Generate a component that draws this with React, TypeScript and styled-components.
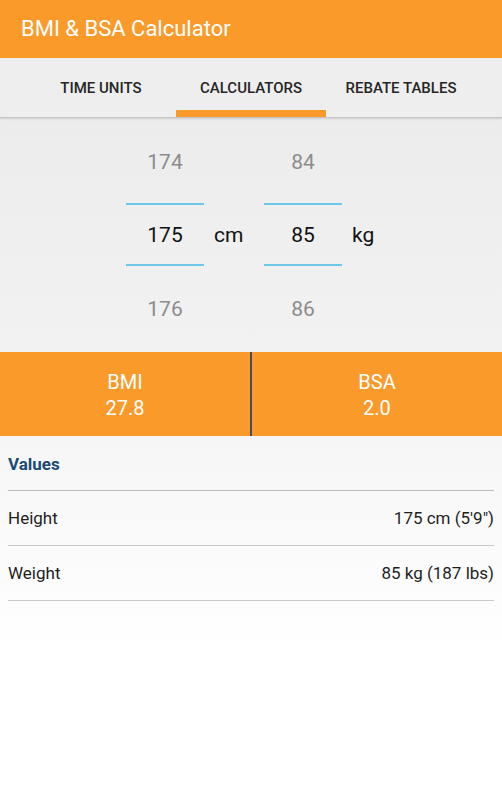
import React from "react";
import styled, { createGlobalStyle } from "styled-components";

const GlobalStyle = createGlobalStyle`
  html, body {
    margin: 0;
    padding: 0;
    background: #ffffff;
    font-family: Roboto, "Noto Sans", sans-serif;
  }
`;

const ORANGE = "#f99a2a";

const tabs = ["TIME UNITS", "CALCULATORS", "REBATE TABLES"];

type PickerProps = { values: [string, string, string]; unit: string };

const Picker = ({ values, unit }: PickerProps) => (
  <PickerGroup>
    <PickerColumn>
      <PickerCell $pos="top">{values[0]}</PickerCell>
      <SelectedCell>{values[1]}</SelectedCell>
      <PickerCell $pos="bottom">{values[2]}</PickerCell>
    </PickerColumn>
    <Unit>{unit}</Unit>
  </PickerGroup>
);

const rows = [
  { label: "Height", value: "175 cm (5'9\")" },
  { label: "Weight", value: "85 kg (187 lbs)" },
];

const App = () => {
  return (
    <Screen>
      <GlobalStyle />
      <AppBar>BMI &amp; BSA Calculator</AppBar>
      <TabBar>
        {tabs.map((t, i) => (
          <Tab key={t} $active={i === 1}>
            {t}
          </Tab>
        ))}
      </TabBar>
      <PickerArea>
        <Picker values={["174", "175", "176"]} unit="cm" />
        <Picker values={["84", "85", "86"]} unit="kg" />
      </PickerArea>
      <Results>
        <Result>
          <span>BMI</span>
          <span>27.8</span>
        </Result>
        <Result>
          <span>BSA</span>
          <span>2.0</span>
        </Result>
      </Results>
      <Values>
        <SectionTitle>Values</SectionTitle>
        {rows.map((r) => (
          <Row key={r.label}>
            <span>{r.label}</span>
            <span>{r.value}</span>
          </Row>
        ))}
      </Values>
    </Screen>
  );
};

const Screen = styled.div`
  width: 502px;
  height: 800px;
  display: flex;
  flex-direction: column;
  overflow: hidden;
`;

const AppBar = styled.div`
  height: 58px;
  background: ${ORANGE};
  color: #ffffff;
  font-size: 22px;
  display: flex;
  align-items: center;
  padding-left: 21px;
  box-sizing: border-box;
  padding-bottom: 1px;
`;

const TabBar = styled.div`
  height: 60px;
  background: #eeeeee;
  display: flex;
  justify-content: center;
  border-bottom: 1px solid #c4c4c4;
  box-sizing: border-box;
  box-shadow: 0 1px 2px rgba(0, 0, 0, 0.12);
  position: relative;
  z-index: 1;
`;

const Tab = styled.div<{ $active: boolean }>`
  width: 150px;
  display: flex;
  align-items: center;
  justify-content: center;
  font-size: 15px;
  font-weight: 500;
  color: #262626;
  box-sizing: border-box;
  border-bottom: 7px solid ${(p) => (p.$active ? ORANGE : "transparent")};
  padding-top: 8px;
`;

const PickerArea = styled.div`
  height: 234px;
  background: linear-gradient(#ececec, #f2f2f2);
  display: flex;
  padding-left: 126px;
`;

const PickerGroup = styled.div`
  display: flex;
  align-items: flex-start;
`;

const PickerColumn = styled.div`
  width: 78px;
  display: flex;
  flex-direction: column;
`;

const PickerCell = styled.div<{ $pos: "top" | "bottom" }>`
  height: ${(p) => (p.$pos === "top" ? 85 : 86)}px;
  display: flex;
  align-items: center;
  justify-content: center;
  font-size: 21px;
  color: #8c8c8c;
  padding-top: ${(p) => (p.$pos === "top" ? 3 : 0)}px;
  box-sizing: border-box;
`;

const SelectedCell = styled.div`
  height: 63px;
  border-top: 2px solid #6ec6ea;
  border-bottom: 2px solid #6ec6ea;
  box-sizing: border-box;
  display: flex;
  align-items: center;
  justify-content: center;
  font-size: 21px;
  color: #111111;
`;

const Unit = styled.div`
  margin-top: 85px;
  height: 63px;
  display: flex;
  align-items: center;
  font-size: 21px;
  color: #111111;
  padding-left: 10px;
  width: 60px;
  box-sizing: border-box;
`;

const Results = styled.div`
  height: 84px;
  background: ${ORANGE};
  display: flex;
`;

const Result = styled.div`
  flex: 1;
  display: flex;
  flex-direction: column;
  align-items: center;
  justify-content: center;
  color: #ffffff;
  font-size: 20px;
  line-height: 26px;
  padding-top: 2px;
  & + & {
    border-left: 2px solid #4b4863;
  }
`;

const Values = styled.div`
  flex: 1;
  background: linear-gradient(#f6f6f6, #ffffff 60%);
  padding: 0 8px;
`;

const SectionTitle = styled.div`
  height: 55px;
  display: flex;
  align-items: center;
  font-size: 17px;
  font-weight: 700;
  color: #1b4a76;
  border-bottom: 1px solid #bdbdbd;
  padding-top: 2px;
  box-sizing: border-box;
`;

const Row = styled.div`
  height: 55px;
  display: flex;
  align-items: center;
  justify-content: space-between;
  font-size: 17px;
  color: #1e1e1e;
  border-bottom: 1px solid #c8c8c8;
  box-sizing: border-box;
`;

export default App;
